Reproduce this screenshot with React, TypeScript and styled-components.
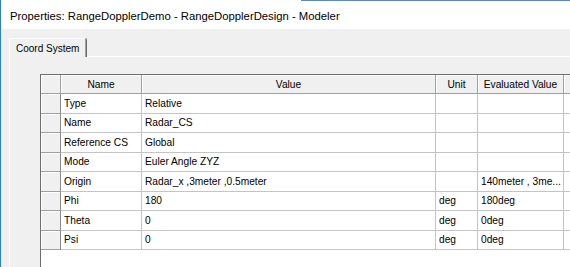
import { Fragment } from 'react';
import styled, { createGlobalStyle } from 'styled-components';

const GlobalStyle = createGlobalStyle`
  html, body {
    margin: 0;
    padding: 0;
    background: #ffffff;
  }
  body {
    font-family: 'Liberation Sans', Arial, sans-serif;
    color: #000000;
  }
`;

const Window = styled.div`
  width: 570px;
  height: 267px;
  overflow: hidden;
  box-sizing: border-box;
  border-left: 1px solid #2f7fcf;
  display: flex;
  flex-direction: column;
  background: #f0f0f0;
`;

const TitleBar = styled.div`
  height: 29px;
  flex-shrink: 0;
  box-sizing: border-box;
  padding: 2px 0 0 9px;
  display: flex;
  align-items: center;
  font-size: 11.3px;
  color: #000000;
  white-space: nowrap;
  background:
    linear-gradient(to right, transparent 300px, #4a90d6 300px) top / 100% 1px no-repeat,
    #ffffff;
`;

const Body = styled.div`
  flex-grow: 1;
  display: flex;
  flex-direction: column;
  padding: 9px 0 0 8px;
  min-height: 0;
`;

const TabStrip = styled.div`
  display: flex;
  align-items: flex-end;
  height: 19px;
  flex-shrink: 0;
`;

const Tab = styled.div`
  width: 77px;
  height: 19px;
  box-sizing: border-box;
  border-top: 1px solid #ffffff;
  border-left: 1px solid #ffffff;
  border-right: 1px solid #a0a0a0;
  box-shadow: 1px 0 0 #696969;
  border-top-left-radius: 2px;
  border-top-right-radius: 2px;
  display: flex;
  align-items: center;
  padding-left: 6px;
  font-size: 10px;
  white-space: nowrap;
  position: relative;
  z-index: 1;
`;

const TabLine = styled.div`
  flex-grow: 1;
  height: 1px;
  background: #ffffff;
`;

const Panel = styled.div`
  flex-grow: 1;
  display: flex;
  flex-direction: column;
  border-left: 1px solid #ffffff;
  padding: 17px 0 0 30px;
  min-height: 0;
`;

const Grid = styled.div`
  flex-grow: 1;
  display: grid;
  grid-template-columns: 20px 81px 294px 42px 86px 100px;
  grid-template-rows: 19px;
  grid-auto-rows: 19.5px;
  align-content: start;
  background: #ffffff;
  border-top: 1px solid #6d6d6d;
  border-left: 1px solid #6d6d6d;
  font-size: 10.2px;
`;

const HeaderCell = styled.div<{ center?: boolean }>`
  box-sizing: border-box;
  background: #f0f0f0;
  border-right: 1px solid #a0a0a0;
  border-bottom: 1px solid #a0a0a0;
  box-shadow: inset 1px 1px 0 #ffffff;
  display: flex;
  align-items: center;
  justify-content: ${({ center }) => (center ? 'center' : 'flex-start')};
  white-space: nowrap;
  overflow: hidden;
`;

const RowHeader = styled.div`
  box-sizing: border-box;
  background: #f0f0f0;
  border-right: 1px solid #8a8a8a;
  border-bottom: 1px solid #a0a0a0;
  box-shadow: inset 1px 1px 0 #ffffff;
`;

const Cell = styled.div`
  box-sizing: border-box;
  border-right: 1px solid #c4c4c4;
  border-bottom: 1px solid #c4c4c4;
  padding: 0 3px;
  display: flex;
  align-items: center;
  min-width: 0;
  white-space: nowrap;
`;

type Row = {
  name: string;
  value: string;
  unit: string;
  evaluated: string;
};

const rows: Row[] = [
  { name: 'Type', value: 'Relative', unit: '', evaluated: '' },
  { name: 'Name', value: 'Radar_CS', unit: '', evaluated: '' },
  { name: 'Reference CS', value: 'Global', unit: '', evaluated: '' },
  { name: 'Mode', value: 'Euler Angle ZYZ', unit: '', evaluated: '' },
  {
    name: 'Origin',
    value: 'Radar_x ,3meter ,0.5meter',
    unit: '',
    evaluated: '140meter , 3me...',
  },
  { name: 'Phi', value: '180', unit: 'deg', evaluated: '180deg' },
  { name: 'Theta', value: '0', unit: 'deg', evaluated: '0deg' },
  { name: 'Psi', value: '0', unit: 'deg', evaluated: '0deg' },
];

const App = () => {
  return (
    <>
      <GlobalStyle />
      <Window>
        <TitleBar>Properties: RangeDopplerDemo - RangeDopplerDesign - Modeler</TitleBar>
        <Body>
          <TabStrip>
            <Tab>Coord System</Tab>
            <TabLine />
          </TabStrip>
          <Panel>
            <Grid>
              <HeaderCell />
              <HeaderCell center>Name</HeaderCell>
              <HeaderCell center>Value</HeaderCell>
              <HeaderCell center>Unit</HeaderCell>
              <HeaderCell center>Evaluated Value</HeaderCell>
              <HeaderCell />
              {rows.map((row) => (
                <Fragment key={row.name}>
                  <RowHeader />
                  <Cell>{row.name}</Cell>
                  <Cell>{row.value}</Cell>
                  <Cell>{row.unit}</Cell>
                  <Cell>{row.evaluated}</Cell>
                  <Cell />
                </Fragment>
              ))}
            </Grid>
          </Panel>
        </Body>
      </Window>
    </>
  );
};

export default App;
